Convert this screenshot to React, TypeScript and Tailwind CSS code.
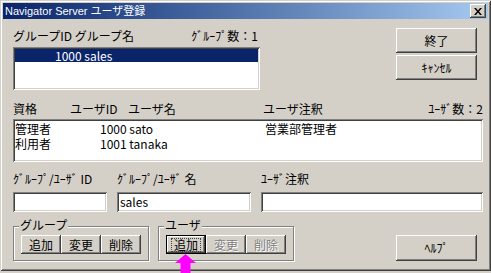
import React from "react";

const raised =
  "shadow-[inset_-1px_-1px_0_#404040,inset_1px_1px_0_#ffffff,inset_-2px_-2px_0_#808080,inset_2px_2px_0_#d4d0c8]";
const sunken =
  "shadow-[inset_1px_1px_0_#808080,inset_-1px_-1px_0_#ffffff,inset_2px_2px_0_#404040,inset_-2px_-2px_0_#d4d0c8]";

function Btn({
  children,
  w,
  h,
  disabled,
  focused,
}: {
  children: React.ReactNode;
  w: string;
  h: string;
  disabled?: boolean;
  focused?: boolean;
}) {
  if (focused) {
    return (
      <div className={`${w} ${h} border border-black flex`}>
        <div className="flex-1 flex items-center justify-center shadow-[inset_-1px_-1px_0_#404040,inset_1px_1px_0_#ffffff,inset_-2px_-2px_0_#808080]">
          <span className="border border-dotted border-[#404040] px-[2px] leading-[12px]">
            {children}
          </span>
        </div>
      </div>
    );
  }
  return (
    <div
      className={`${w} ${h} ${raised} flex items-center justify-center ${
        disabled ? "text-[#808080] [text-shadow:1px_1px_0_#ffffff]" : "text-black"
      }`}
    >
      {children}
    </div>
  );
}

function GroupBox({
  label,
  children,
}: {
  label: string;
  children: React.ReactNode;
}) {
  return (
    <div className="relative pt-[8px]">
      <div className="border border-[#808080] shadow-[1px_1px_0_#ffffff,inset_1px_1px_0_#ffffff] pl-[7px] pr-[7px] pt-[8px] pb-[6px] flex">
        {children}
      </div>
      <div className="absolute left-[6px] top-0 bg-[#d4d0c8] px-[1px] leading-[13px]">
        {label}
      </div>
    </div>
  );
}

export default function App() {
  return (
    <div className="relative w-[491px] h-[273px] bg-[#d4d0c8] overflow-hidden font-['Noto_Sans_CJK_JP',sans-serif] text-[12px] text-black">
      <div className="w-[491px] h-[271px] flex flex-col shadow-[inset_1px_1px_0_#d4d0c8,inset_-1px_-1px_0_#404040,inset_2px_2px_0_#ffffff,inset_-2px_-2px_0_#808080]">
        {/* title bar */}
        <div className="mx-[3px] mt-[3px] h-[16px] bg-linear-to-r from-[#0a246a] to-[#a6caf0] flex items-center pl-[2px] pr-[2px]">
          <span className="text-white text-[11px] leading-[14px] font-['Liberation_Sans','Noto_Sans_CJK_JP',sans-serif]">
            Navigator Server ユーザ登録
          </span>
          <div className={`ml-auto w-[16px] h-[14px] bg-[#d4d0c8] ${raised} flex items-center justify-center`}>
            <svg width="8" height="7" viewBox="0 0 8 7">
              <path d="M0 0h2l2 2.5L6 0h2L5 3.5 8 7H6L4 4.5 2 7H0l3-3.5z" fill="#000" />
            </svg>
          </div>
        </div>

        <div className="flex flex-col pl-[13px] pr-[8px]">
          {/* row 1 */}
          <div className="flex mt-[9px]">
            <div className="w-[247px] flex flex-col">
              <div className="h-[19px] flex items-start pt-[1px] leading-[14px]">
                <span>グループID グループ名</span>
                <span className="ml-auto mr-[2px]">ｸﾞﾙｰﾌﾟ数：1</span>
              </div>
              <div className={`h-[43px] bg-white ${sunken} p-[2px]`}>
                <div className="h-[13px] bg-[#0a246a] text-white leading-[13px] pl-[40px]">
                  1000 sales
                </div>
              </div>
            </div>
            <div className="ml-auto mr-[6px] flex flex-col gap-[2px]">
              <Btn w="w-[81px]" h="h-[25px]">終了</Btn>
              <Btn w="w-[81px]" h="h-[25px]">ｷｬﾝｾﾙ</Btn>
            </div>
          </div>

          {/* row 2 */}
          <div className="mt-[11px] h-[18px] flex items-start leading-[14px] pt-[1px]">
            <span className="w-[57px]">資格</span>
            <span className="w-[58px]">ユーザID</span>
            <span className="w-[135px]">ユーザ名</span>
            <span>ユーザ注釈</span>
            <span className="ml-auto">ﾕｰｻﾞ数：2</span>
          </div>
          <div className={`h-[43px] bg-white ${sunken} pt-[2px] pl-[2px] leading-[15px]`}>
            <div className="flex h-[15px]">
              <span className="w-[85px]">管理者</span>
              <span className="w-[165px]">1000 sato</span>
              <span>営業部管理者</span>
            </div>
            <div className="flex h-[15px]">
              <span className="w-[85px]">利用者</span>
              <span>1001 tanaka</span>
            </div>
          </div>

          {/* row 3 */}
          <div className="mt-[9px] h-[21px] flex items-start leading-[14px] pt-[1px]">
            <span className="w-[104px]">ｸﾞﾙｰﾌﾟ/ﾕｰｻﾞ ID</span>
            <span className="w-[144px]">ｸﾞﾙｰﾌﾟ/ﾕｰｻﾞ 名</span>
            <span>ﾕｰｻﾞ注釈</span>
          </div>
          <div className="flex gap-[10px]">
            <div className={`w-[94px] h-[20px] bg-white ${sunken}`} />
            <div className={`w-[134px] h-[20px] bg-white ${sunken} pl-[3px] leading-[20px]`}>
              sales
            </div>
            <div className={`flex-1 h-[20px] bg-white ${sunken}`} />
          </div>

          {/* row 4 */}
          <div className="mt-[6px] flex items-start">
            <GroupBox label="グループ">
              <Btn w="w-[40px]" h="h-[19px]">追加</Btn>
              <Btn w="w-[40px]" h="h-[19px]">変更</Btn>
              <Btn w="w-[40px]" h="h-[19px]">削除</Btn>
            </GroupBox>
            <div className="ml-[9px]">
              <GroupBox label="ユーザ">
                <Btn w="w-[40px]" h="h-[19px]" focused>追加</Btn>
                <Btn w="w-[40px]" h="h-[19px]" disabled>変更</Btn>
                <Btn w="w-[40px]" h="h-[19px]" disabled>削除</Btn>
              </GroupBox>
            </div>
            <div className="ml-auto mr-[6px] mt-[17px]">
              <Btn w="w-[81px]" h="h-[26px]">ﾍﾙﾌﾟ</Btn>
            </div>
          </div>
        </div>
      </div>

      {/* magenta arrow */}
      <svg className="absolute left-[175px] top-[254px]" width="21" height="19" viewBox="0 0 21 19">
        <path d="M10.5 0L21 9H15.5V19H5.5V9H0Z" fill="#ff00ff" />
      </svg>
    </div>
  );
}
